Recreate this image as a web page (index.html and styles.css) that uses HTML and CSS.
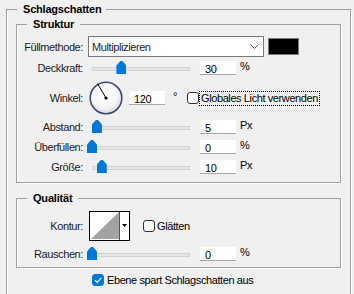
FILE: index.html
```html
<!DOCTYPE html>
<html lang="de">
    <head>
        <meta charset="UTF-8">
        <meta name="viewport" content="width=device-width, initial-scale=1.0">
        <title>Schlagschatten</title>
        <link rel="stylesheet" href="styles.css">
    </head>
    <body>
        <fieldset class="group">
            <legend>Schlagschatten</legend>

            <!-- Struktur -->
            <fieldset class="sub struktur">
                <legend>Struktur</legend>
                <div class="row row-mode">
                    <label class="lbl">Füllmethode:</label>
                    <div class="select">
                        <span>Multiplizieren</span>
                        <svg class="chev" width="9" height="5" viewBox="0 0 9 5"><polyline points="0.5,0.5 4.5,4.5 8.5,0.5" fill="none" stroke="#606060"/></svg>
                    </div>
                    <div class="swatch"></div>
                </div>
                <div class="row">
                    <label class="lbl">Deckkraft:</label>
                    <div class="slider"><div class="track"></div><div class="thumb" style="left: 30%"></div></div>
                    <div class="field"><div class="value">30</div><span class="unit">%</span></div>
                </div>
                <div class="row row-angle">
                    <label class="lbl">Winkel:</label>
                    <svg class="dial" width="34" height="34" viewBox="0 0 34 34">
                        <defs>
                            <radialGradient id="dialFill" cx="45%" cy="40%" r="60%">
                                <stop offset="0" stop-color="#ffffff"/>
                                <stop offset="0.7" stop-color="#f4f4f4"/>
                                <stop offset="1" stop-color="#d9dbe0"/>
                            </radialGradient>
                        </defs>
                        <circle cx="17" cy="17" r="15.8" fill="url(#dialFill)" stroke="#3e4b6c" stroke-width="1.6"/>
                        <line x1="17" y1="17" x2="8.5" y2="2.6" stroke="#000" stroke-width="1"/>
                        <circle cx="17" cy="17" r="1.6" fill="#000"/>
                    </svg>
                    <div class="field field-angle"><div class="value">120</div><span class="unit">°</span></div>
                    <span class="check"></span>
                    <span class="check-text focus">Globales Licht verwenden</span>
                </div>
                <div class="row row-gap5">
                    <label class="lbl">Abstand:</label>
                    <div class="slider"><div class="track"></div><div class="thumb" style="left: 5%"></div></div>
                    <div class="field"><div class="value">5</div><span class="unit">Px</span></div>
                </div>
                <div class="row">
                    <label class="lbl">Überfüllen:</label>
                    <div class="slider"><div class="track"></div><div class="thumb" style="left: 0%"></div></div>
                    <div class="field"><div class="value">0</div><span class="unit">%</span></div>
                </div>
                <div class="row">
                    <label class="lbl">Größe:</label>
                    <div class="slider"><div class="track"></div><div class="thumb" style="left: 10%"></div></div>
                    <div class="field"><div class="value">10</div><span class="unit">Px</span></div>
                </div>
            </fieldset>

            <!-- Qualität -->
            <fieldset class="sub qualitaet">
                <legend>Qualität</legend>
                <div class="row row-contour">
                    <label class="lbl">Kontur:</label>
                    <svg class="contour" width="41" height="30" viewBox="0 0 41 30">
                        <rect x="0.5" y="0.5" width="40" height="29" fill="#fff" stroke="#000"/>
                        <polygon points="2,28 30,1 30,28" fill="#a3a3a3"/>
                        <line x1="30.5" y1="1" x2="30.5" y2="29" stroke="#555"/>
                        <polygon points="33,13 38,13 35.5,16" fill="#000"/>
                    </svg>
                    <span class="check check-smooth"></span>
                    <span class="check-text">Glätten</span>
                </div>
                <div class="row">
                    <label class="lbl">Rauschen:</label>
                    <div class="slider"><div class="track"></div><div class="thumb" style="left: 0%"></div></div>
                    <div class="field"><div class="value">0</div><span class="unit">%</span></div>
                </div>
            </fieldset>

            <div class="keep">
                <span class="check checked">
                    <svg width="10" height="10" viewBox="0 0 10 10"><polyline points="2,5.2 4.2,7.3 8.2,2.8" fill="none" stroke="#fff" stroke-width="1.2"/></svg>
                </span>
                <span class="check-text">Ebene spart Schlagschatten aus</span>
            </div>
        </fieldset>
    </body>
</html>
```
FILE: styles.css
```css
html {
    height: 294px;
    overflow: hidden;
    background: #f0f0f0;
}

body {
    margin: 0;
    height: 294px;
    overflow: hidden;
    background: #f0f0f0;
    font-family: "Liberation Sans", Arial, sans-serif;
    font-size: 11px;
    letter-spacing: -0.4px;
    color: #1b1b1b;
}

/* Gruppenrahmen */
fieldset {
    border: 1px solid #a0a0a0;
    box-shadow: inset 1px 0 #fff, 1px 1px #fff;
    padding: 0;
    min-width: 0;
}

legend {
    font-weight: bold;
    letter-spacing: -0.2px;
    line-height: 13px;
    color: #000;
}

/* unterer Rand liegt außerhalb des Ausschnitts */
.group {
    margin: 3px 3px 0 6px;
    height: 300px;
}

.group > legend {
    margin-left: 10px;
    padding: 0 4px 0 6px;
}

.sub {
    margin: 2px 9px 0 9px;
}

.sub > legend {
    margin-left: 10px;
    padding: 0 6px;
}

.struktur {
    padding: 5px 0 8px;
}

.qualitaet {
    margin-top: 9px;
    padding: 6px 0 6px;
}

/* Zeilen */
.row {
    display: flex;
    align-items: center;
    height: 14px;
    margin-top: 6px;
}

.row-mode {
    height: 21px;
    margin-top: 0;
}

.row-mode + .row {
    margin-top: 4px;
}

.row-angle {
    height: 34px;
}

.row-gap5 {
    margin-top: 5px;
}

.row-contour {
    height: 30px;
    margin-top: 0;
}

.lbl {
    flex: none;
    width: 66px;
    text-align: right;
}

.select {
    box-sizing: border-box;
    display: flex;
    align-items: center;
    justify-content: space-between;
    width: 176px;
    height: 21px;
    margin-left: 5px;
    padding: 0 4px 0 3px;
    background: #fff;
    border: 1px solid #7a7a7a;
}

.swatch {
    box-sizing: border-box;
    width: 31px;
    height: 17px;
    margin-left: 4px;
    background: #000;
    border: 1px solid #7a7a7a;
}

/* Schieberegler */
.slider {
    position: relative;
    flex: none;
    width: 98px;
    height: 14px;
    margin-left: 9px;
}

.track {
    box-sizing: border-box;
    margin-top: 6px;
    height: 4px;
    background: #e6e6e6;
    border: 1px solid #d2d2d2;
}

.thumb {
    position: absolute;
    top: 0;
    width: 10px;
    height: 13px;
    margin-left: -5px;
    background: #0078d7;
    clip-path: polygon(0 35%, 40% 0, 60% 0, 100% 35%, 100% 100%, 0 100%);
}

.field {
    display: flex;
    align-items: flex-start;
    margin-left: 10px;
}

.value {
    box-sizing: border-box;
    width: 36px;
    height: 14px;
    padding: 3px 0 0 5px;
    line-height: 11px;
    background: #fff;
    border-bottom: 1px solid #a8a8a8;
    color: #000;
}

.unit {
    margin-left: 4px;
    line-height: 11px;
    color: #000;
}

.field-angle {
    margin-left: 6px;
}

.field-angle .unit {
    margin-left: 8px;
}

.dial {
    flex: none;
    margin-left: 6px;
}

/* Kontrollkästchen */
.check {
    box-sizing: border-box;
    display: inline-flex;
    align-items: center;
    justify-content: center;
    flex: none;
    width: 12px;
    height: 12px;
    margin-left: 10px;
    background: #fbfbfb;
    border: 1px solid #333;
    border-radius: 3px;
}

.check-smooth {
    margin-left: 13px;
}

.check.checked {
    margin-left: 0;
    background: #0078d7;
    border-color: #0078d7;
}

.check-text {
    margin-left: 2px;
    color: #000;
}

.focus {
    margin-left: 1px;
    padding: 0 1px;
    line-height: 13px;
    outline: 1px dotted #000;
}

.contour {
    flex: none;
    margin-left: 6px;
}

.keep {
    display: flex;
    align-items: center;
    height: 12px;
    margin: 6px 0 0 85px;
}

.keep .check-text {
    margin-left: 3px;
}
```
